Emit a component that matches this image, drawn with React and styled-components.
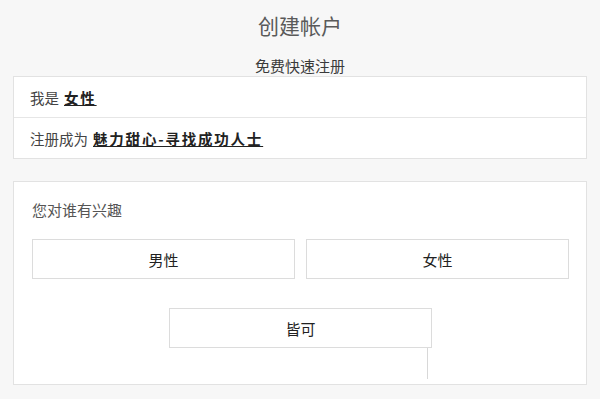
import styled, { createGlobalStyle } from "styled-components"

const GlobalStyle = createGlobalStyle`
    body {
        margin: 0;
        background-color: #f7f7f7;
        font-family: "Noto Sans CJK SC", "Noto Sans", sans-serif;
        color: #333;
    }
`

const Page = styled.div`
    display: flex;
    flex-direction: column;
    padding: 10px 13px 0;
`

const Title = styled.h1`
    margin: 0;
    font-size: 21px;
    font-weight: 400;
    line-height: 30px;
    text-align: center;
    color: #5a5a5a;
`

const Subtitle = styled.h2`
    margin: 16px 0 0;
    font-size: 15px;
    font-weight: 400;
    line-height: 20px;
    text-align: center;
    color: #3a3a3a;
`

const InfoBox = styled.div`
    display: flex;
    flex-direction: column;
    background-color: #fff;
    border: 1px solid #e2e2e2;
`

const InfoRow = styled.div`
    display: flex;
    align-items: center;
    height: 40px;
    padding-left: 16px;
    font-size: 14.5px;
    color: #444;
    & + & {
        border-top: 1px solid #e6e6e6;
    }
`

const Link = styled.a`
    margin-left: 5px;
    font-weight: 700;
    letter-spacing: 1.8px;
    color: #222;
    text-decoration: underline;
    cursor: pointer;
`

const InterestBox = styled.div`
    display: flex;
    flex-direction: column;
    margin-top: 22px;
    padding: 18px 17px 5px 18px;
    background-color: #fff;
    border: 1px solid #e2e2e2;
`

const Label = styled.div`
    font-size: 15px;
    line-height: 20px;
    color: #555;
`

const ChoiceRow = styled.div`
    display: grid;
    grid-template-columns: 1fr 1fr;
    gap: 11px;
    margin-top: 19px;
`

const Choice = styled.button`
    height: 40px;
    width: ${({ $width }) => $width || "auto"};
    padding: 0;
    background-color: #fff;
    border: 1px solid #dcdcdc;
    font-family: inherit;
    font-size: 15px;
    color: #222;
    cursor: pointer;
`

const Center = styled.div`
    display: flex;
    flex-direction: column;
    align-items: flex-start;
    margin: 29px 0 0 137px;
`

const Ghost = styled.div`
    width: 258px;
    height: 31px;
    border-right: 1px solid #d8d8d8;
`

export default function App() {
    return (
        <>
            <GlobalStyle />
            <Page>
                <Title>创建帐户</Title>
                <Subtitle>免费快速注册</Subtitle>
                <InfoBox>
                    <InfoRow>我是<Link>女性</Link></InfoRow>
                    <InfoRow>注册成为<Link>魅力甜心-寻找成功人士</Link></InfoRow>
                </InfoBox>
                <InterestBox>
                    <Label>您对谁有兴趣</Label>
                    <ChoiceRow>
                        <Choice>男性</Choice>
                        <Choice>女性</Choice>
                    </ChoiceRow>
                    <Center>
                        <Choice $width="263px">皆可</Choice>
                        <Ghost />
                    </Center>
                </InterestBox>
            </Page>
        </>
    )
}
